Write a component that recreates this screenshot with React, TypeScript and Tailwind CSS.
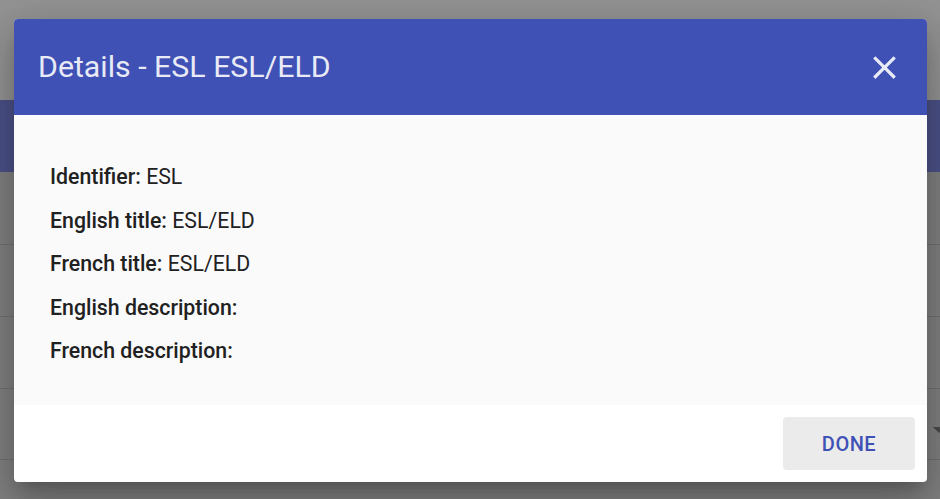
import React from "react";

export default function App() {
  const rows: [string, string][] = [
    ["Identifier:", "ESL"],
    ["English title:", "ESL/ELD"],
    ["French title:", "ESL/ELD"],
    ["English description:", ""],
    ["French description:", ""],
  ];
  return (
    <div
      className="relative w-[940px] h-[499px] overflow-hidden bg-[#808080]"
      style={{ fontFamily: "Roboto, 'Noto Sans', sans-serif" }}
    >
      {/* dimmed background page */}
      <div className="flex flex-col">
        <div className="h-[100px] bg-[#939393]" />
        <div className="h-[72px] bg-[#4b5187]" />
        <div className="h-[73px] border-b border-[#707070]" />
        <div className="h-[72px] border-b border-[#707070]" />
        <div className="h-[72px] border-b border-[#707070]" />
        <div className="h-[71px] border-b border-[#707070] relative">
          <div className="absolute right-0 top-[38px] w-0 h-0 border-l-[6px] border-r-[6px] border-t-[6px] border-l-transparent border-r-transparent border-t-[#4a4a4a] translate-x-[5px]" />
        </div>
      </div>

      {/* dialog */}
      <div className="absolute left-[14px] top-[19px] w-[913px] h-[463px] rounded-[4px] overflow-hidden bg-white shadow-[0_11px_15px_-7px_rgba(0,0,0,0.2),0_24px_38px_3px_rgba(0,0,0,0.14),0_9px_46px_8px_rgba(0,0,0,0.12)] flex flex-col">
        <div className="h-[96px] bg-[#3f51b5] flex items-center justify-between pl-[24px] pr-[23px] shrink-0">
          <span className="text-[30.3px] text-[#e8eaf6] leading-none">Details - ESL ESL/ELD</span>
          <svg width="39" height="39" viewBox="0 0 24 24" className="text-[#e8eaf6]">
            <path
              d="M19 6.41 17.59 5 12 10.59 6.41 5 5 6.41 10.59 12 5 17.59 6.41 19 12 13.41 17.59 19 19 17.59 13.41 12z"
              fill="currentColor"
            />
          </svg>
        </div>
        <div className="h-[290px] bg-[#fafafa] pt-[40px] pl-[36px] flex flex-col shrink-0">
          {rows.map(([k, v]) => (
            <div key={k} className="text-[21.3px] leading-[43.5px] text-[#212121]">
              <span className="font-medium">{k}</span>
              {v ? <span> {v}</span> : null}
            </div>
          ))}
        </div>
        <div className="flex-1 flex justify-end items-start pt-[12px] pr-[12px]">
          <button className="w-[132px] h-[53px] bg-[#ebebeb] rounded-[4px] text-[#3f51b5] text-[20px] font-medium tracking-[0.5px]">
            DONE
          </button>
        </div>
      </div>
    </div>
  );
}
